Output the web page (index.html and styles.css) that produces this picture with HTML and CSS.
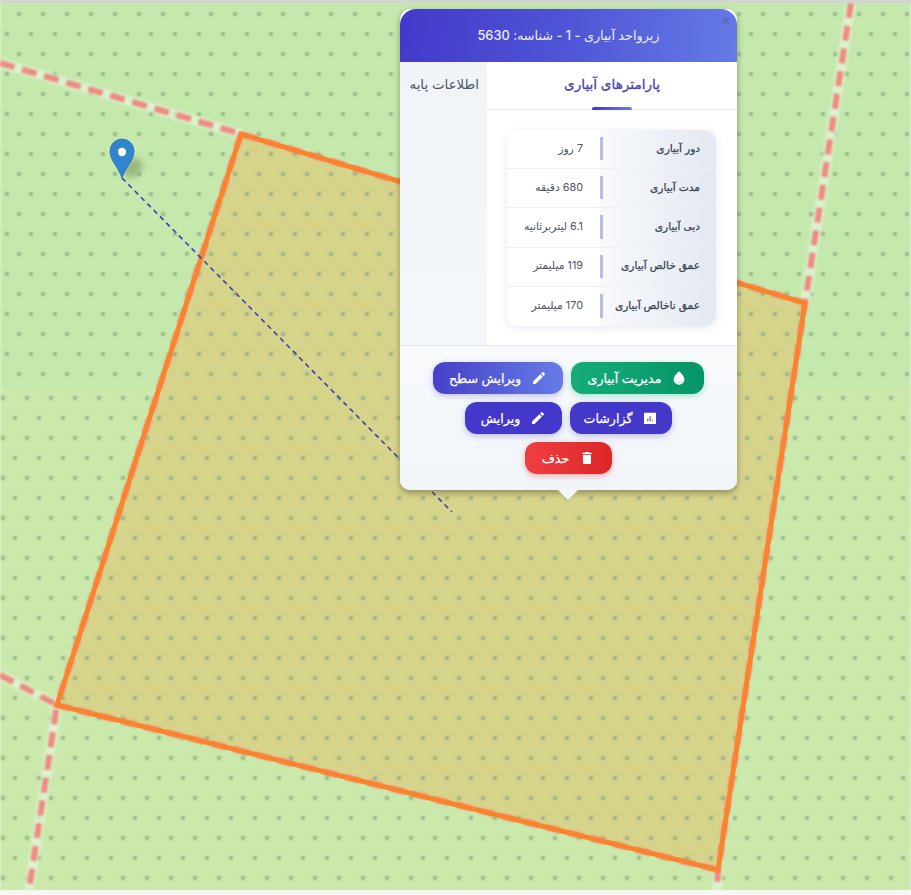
FILE: index.html
```html
<!DOCTYPE html>
<html lang="fa">
<head>
<meta charset="utf-8">
<title>زیرواحد آبیاری</title>
<link rel="stylesheet" href="styles.css">
</head>
<body>
<div class="topline"></div>
<main class="map">
  <svg class="map-art" width="911" height="887" viewBox="0 3 911 887" aria-hidden="true">
    <defs>
      <pattern id="dots-a" width="24" height="40" patternUnits="userSpaceOnUse" patternTransform="translate(0 14)">
        <circle cx="19" cy="0" r="2" fill="#8aa97e"/>
        <circle cx="19" cy="40" r="2" fill="#8aa97e"/>
        <circle cx="7" cy="20" r="2" fill="#8aa97e"/>
      </pattern>
      <pattern id="dots-b" width="24" height="40" patternUnits="userSpaceOnUse" patternTransform="translate(0 38)">
        <circle cx="3" cy="0" r="2" fill="#8aa97e"/>
        <circle cx="27" cy="0" r="2" fill="#8aa97e"/>
        <circle cx="3" cy="40" r="2" fill="#8aa97e"/>
        <circle cx="27" cy="40" r="2" fill="#8aa97e"/>
        <circle cx="15" cy="20" r="2" fill="#8aa97e"/>
      </pattern>
    </defs>
    <g class="blurred">
      <rect x="0" y="0" width="911" height="386" fill="#c5e9ad"/>
      <rect x="0" y="386" width="911" height="510" fill="#cae9ab"/>
      <polygon points="241,134 805,303 718,870 57,705" fill="#d6d38b"/>
      <rect x="0" y="0" width="911" height="386" fill="url(#dots-a)"/>
      <rect x="0" y="386" width="911" height="510" fill="url(#dots-b)"/>
      <g fill="none" stroke="#e4f5d9" stroke-width="10" opacity=".7">
        <path d="M0 63 241 134M851 3 805 303M718 870 717 890M0 675 57 705 29 890"/>
      </g>
      <g fill="none" stroke="#ee8a80" stroke-width="6" stroke-dasharray="15 8">
        <path d="M0 63 241 134 805 303"/>
        <path d="M851 3 805 303 718 870 717 890"/>
        <path d="M0 675 57 705 29 890"/>
        <path d="M241 134 57 705 718 870"/>
      </g>
    </g>
    <polygon class="soft" points="241,134 805,303 718,870 57,705" fill="none" stroke="#fb832f" stroke-width="5"/>
    <path d="M122 178 452 512" stroke="#3f3fae" stroke-width="1.6" stroke-dasharray="5 4" fill="none"/>
    <ellipse cx="133" cy="168" rx="8" ry="11" fill="#5e7a45" opacity=".45" class="pin-shadow" transform="rotate(40 133 168)"/>
    <path d="M122 178C118 166 110 161 110 151A12 12 0 0 1 134 151C134 161 126 166 122 178Z" fill="#2f86cf" stroke="#2369a6" stroke-width=".7"/>
    <circle cx="122" cy="152" r="4.2" fill="#fff"/>
  </svg>

  <section class="popup" dir="rtl">
    <span class="close" aria-label="بستن">×</span>
    <header class="popup-head">زیرواحد آبیاری - 1 - شناسه: 5630</header>
    <div class="tabs-wrap">
      <div class="pane">
        <div class="tab-active">پارامترهای آبیاری</div>
        <div class="pane-body">
          <div class="params">
            <div class="row"><div class="key">دور آبیاری</div><div class="val">7 روز</div></div>
            <div class="row"><div class="key">مدت آبیاری</div><div class="val">680 دقیقه</div></div>
            <div class="row"><div class="key">دبی آبیاری</div><div class="val">6.1 لیتربرثانیه</div></div>
            <div class="row"><div class="key">عمق خالص آبیاری</div><div class="val">119 میلیمتر</div></div>
            <div class="row"><div class="key">عمق ناخالص آبیاری</div><div class="val">170 میلیمتر</div></div>
          </div>
        </div>
      </div>
      <div class="side"><div class="tab">اطلاعات پایه</div></div>
    </div>
    <footer class="actions">
      <div class="btn-row">
        <button class="btn green w133"><svg viewBox="0 0 24 24"><path d="M12 2c-5.33 4.55-8 8.48-8 11.8 0 4.98 3.8 8.2 8 8.2s8-3.22 8-8.2c0-3.32-2.67-7.25-8-11.8z"/><path class="shade" d="M12 20c2.9 0 5.3-1.8 6-5-1.600 1.400-3.600 2.300-6 2.300-1.800 0-3.400-.5-4.700-1.300C8.200 18.600 10 20 12 20z"/></svg>مدیریت آبیاری</button>
        <button class="btn grad w130"><svg viewBox="0 0 24 24"><path d="M3 17.25V21h3.75L17.81 9.94l-3.75-3.75L3 17.25zM20.71 7.04c.39-.39.39-1.02 0-1.41l-2.34-2.34c-.39-.39-1.02-.39-1.41 0l-1.83 1.83 3.75 3.75 1.83-1.83z"/></svg>ویرایش سطح</button>
      </div>
      <div class="btn-row">
        <button class="btn indigo w102"><svg viewBox="0 0 24 24"><path fill-rule="evenodd" d="M3 4h18v17H3zM8 17h1.500v-4H8zM11.300 17h1.500V9.500h-1.500zM14.600 17h1.500v-2.500h-1.500z"/></svg>گزارشات</button>
        <button class="btn indigo w97"><svg viewBox="0 0 24 24"><path d="M3 17.25V21h3.75L17.81 9.94l-3.75-3.75L3 17.25zM20.71 7.04c.39-.39.39-1.02 0-1.41l-2.34-2.34c-.39-.39-1.02-.39-1.41 0l-1.83 1.83 3.75 3.75 1.83-1.83z"/></svg>ویرایش</button>
      </div>
      <div class="btn-row">
        <button class="btn red w87"><svg viewBox="0 0 24 24"><path d="M6 19c0 1.1.9 2 2 2h8c1.1 0 2-.9 2-2V7H6v12zM19 4h-3.5l-1-1h-5l-1 1H5v2h14V4z"/></svg>حذف</button>
      </div>
    </footer>
    <span class="tip"></span>
  </section>
</main>
<div class="bottomline"></div>
</body>
</html>
```
FILE: styles.css
```css
* { box-sizing: border-box; }
html, body { margin: 0; padding: 0; }
body {
  width: 911px;
  height: 895px;
  overflow: hidden;
  background: #f7f8f6;
  font-family: Inter, "DejaVu Sans", sans-serif;
}
.topline { height: 3px; background: #d2d4d2; }
.bottomline { height: 5px; background: #f7f8f6; }
.map { position: relative; width: 911px; height: 887px; overflow: hidden; }
.map-art { display: block; }
.blurred { filter: blur(1px); }
.soft { filter: blur(.5px); }
.pin-shadow { filter: blur(3px); }

.popup {
  position: absolute;
  left: 400px;
  top: 6px;
  width: 337px;
  height: 481px;
  display: flex;
  flex-direction: column;
  border-radius: 10px;
  background: #fff;
  box-shadow: 0 3px 6px rgba(60, 60, 30, .45);
}
.close {
  position: absolute;
  top: 2px;
  right: 6px;
  color: #5d62b4;
  font-size: 15px;
  line-height: 18px;
}
.popup-head {
  height: 53px;
  flex: none;
  display: flex;
  align-items: center;
  justify-content: center;
  border-radius: 16px 16px 0 0;
  background: linear-gradient(100deg, #4338ca 0%, #4f55d6 50%, #667be6 100%);
  color: #eceefb;
  font-size: 12.8px;
  font-weight: 500;
}
.tabs-wrap { flex: none; height: 283px; display: flex; }
.pane { width: 250px; display: flex; flex-direction: column; background: #fff; }
.side { width: 87px; background: linear-gradient(180deg, #f0f3f8, #f3f6fa); }
.tab { padding: 13px 8px 0 0; font-size: 13.4px; color: #4b5563; line-height: 18px; white-space: nowrap; }
.tab-active {
  position: relative;
  height: 48px;
  flex: none;
  padding-top: 12px;
  text-align: center;
  font-size: 13.6px;
  -webkit-text-stroke: .3px #4246ad;
  color: #4246ad;
  border-bottom: 1px solid #e7eaf0;
  line-height: 20px;
}
.tab-active::after {
  content: "";
  position: absolute;
  left: 105px;
  bottom: -1px;
  width: 40px;
  height: 3px;
  border-radius: 2px 2px 0 0;
  background: linear-gradient(90deg, #4338ca, #667eea);
}
.pane-body { flex: 1; padding: 20px 21px 0 20px; }
.params { border-radius: 12px; overflow: hidden; box-shadow: 0 2px 8px rgba(90, 100, 140, .14); }
.row { display: flex; height: 39.2px; border-bottom: 1px solid #edf0f4; }
.row:last-child { border-bottom: 0; }
.key {
  position: relative;
  width: 116px;
  padding: 0 16px 2px 0;
  display: flex;
  align-items: center;
  background: linear-gradient(90deg, #f8fafc, #e3e8f1);
  color: #374151;
  font-size: 10.6px;
  -webkit-text-stroke: .25px #374151;
  white-space: nowrap;
}
.key::after {
  content: "";
  position: absolute;
  left: 0;
  top: 7px;
  bottom: 8px;
  width: 3px;
  background: #babde2;
}
.val {
  flex: 1;
  display: flex;
  align-items: center;
  padding: 0 17px 2px 0;
  background: #fff;
  color: #4b5563;
  font-size: 10.8px;
  white-space: nowrap;
}
.actions {
  flex: 1;
  display: flex;
  flex-direction: column;
  gap: 8px;
  padding-top: 16px;
  border-top: 1px solid #e3e7ee;
  border-radius: 0 0 10px 10px;
  background: linear-gradient(180deg, #f8fafc, #f1f5f9);
}
.btn-row { display: flex; justify-content: center; gap: 8px; }
.btn {
  height: 32px;
  display: inline-flex;
  align-items: center;
  justify-content: center;
  gap: 10px;
  padding: 0;
  border: 0;
  border-radius: 12px;
  color: #fff;
  font: 400 12.6px Inter, "DejaVu Sans", sans-serif;
  -webkit-text-stroke: .25px #fff;
  white-space: nowrap;
}
.btn svg { width: 16px; height: 16px; fill: #fff; flex: none; }
.btn svg .shade { fill: #cfe9de; }
.w133 { width: 133px; }
.w130 { width: 130px; }
.w102 { width: 102px; }
.w97 { width: 97px; }
.w87 { width: 87px; }
.green { background: linear-gradient(90deg, #14ad78, #069468); box-shadow: 0 2px 6px rgba(16, 185, 129, .35); }
.grad { background: linear-gradient(90deg, #4641c8, #667be6); box-shadow: 0 2px 6px rgba(67, 56, 202, .3); }
.indigo { background: #4338ca; box-shadow: 0 2px 6px rgba(67, 56, 202, .3); }
.red { background: linear-gradient(90deg, #ef3e42, #dc2626); box-shadow: 0 2px 6px rgba(239, 68, 68, .4); }
.tip {
  position: absolute;
  left: 158px;
  bottom: -10px;
  width: 0;
  height: 0;
  border-left: 10px solid transparent;
  border-right: 10px solid transparent;
  border-top: 10px solid #f5f7fb;
}
```
